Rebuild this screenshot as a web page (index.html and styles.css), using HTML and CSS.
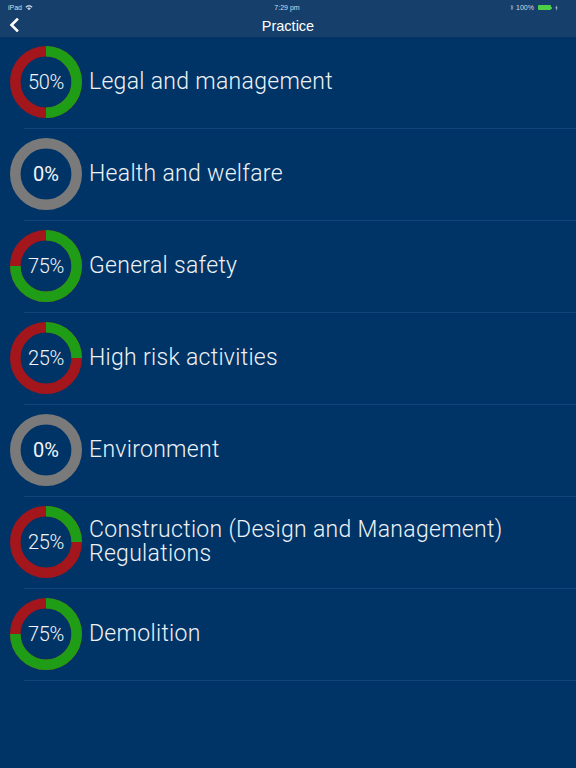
FILE: index.html
```html
<!DOCTYPE html>
<html>
<head>
<meta charset="utf-8">
<link rel="stylesheet" href="styles.css">
</head>
<body>
<header class="top">
  <div class="status">
    <div class="st-left"><span>iPad</span>
      <svg class="wifi" viewBox="0 0 10 8" width="8" height="7"><path d="M0.5 3 Q5 -1 9.5 3 L8.2 4.3 Q5 1.5 1.8 4.3 Z M2.6 5 Q5 3 7.4 5 L5 7.5 Z" fill="#c8d3e0"/></svg>
    </div>
    <div class="st-center">7:29 pm</div>
    <div class="st-right">
      <svg class="bt" viewBox="0 0 6 10" width="4" height="7"><path d="M1 2.8 L4.6 6.4 L2.8 8.4 L2.8 1.6 L4.6 3.6 L1 7.2" fill="none" stroke="#aab6c5" stroke-width="0.9"/></svg>
      <span>100%</span>
      <span class="battery"></span><span class="bat-tip"></span>
      <svg class="bolt" viewBox="0 0 4 8" width="3" height="6"><path d="M2.6 0 L0.4 4.4 L2 4.4 L1.4 8 L3.6 3.4 L2 3.4 Z" fill="#c8d3e0"/></svg>
    </div>
  </div>
  <nav class="navbar">
    <svg class="back" viewBox="0 0 10 14" width="10" height="14"><path d="M8 1.5 L2.5 7 L8 12.5" fill="none" stroke="#ffffff" stroke-width="2.6" stroke-linecap="square"/></svg>
    <h1 class="title">Practice</h1>
  </nav>
</header>
<ul class="list">
  <li class="item"><div class="row">
    <div class="donut"><svg viewBox="0 0 72 72"><circle cx="36" cy="36" r="30.7" class="ring-red"/><circle cx="36" cy="36" r="30.7" class="ring-green" pathLength="100" stroke-dasharray="50 100" transform="rotate(-90 36 36)"/></svg><span class="pct">50%</span></div>
    <div class="label">Legal and management</div></div></li>
  <li class="item"><div class="row">
    <div class="donut"><svg viewBox="0 0 72 72"><circle cx="36" cy="36" r="30.7" class="ring-gray"/></svg><span class="pct zero">0%</span></div>
    <div class="label">Health and welfare</div></div></li>
  <li class="item"><div class="row">
    <div class="donut"><svg viewBox="0 0 72 72"><circle cx="36" cy="36" r="30.7" class="ring-red"/><circle cx="36" cy="36" r="30.7" class="ring-green" pathLength="100" stroke-dasharray="75 100" transform="rotate(-90 36 36)"/></svg><span class="pct">75%</span></div>
    <div class="label">General safety</div></div></li>
  <li class="item"><div class="row">
    <div class="donut"><svg viewBox="0 0 72 72"><circle cx="36" cy="36" r="30.7" class="ring-red"/><circle cx="36" cy="36" r="30.7" class="ring-green" pathLength="100" stroke-dasharray="25 100" transform="rotate(-90 36 36)"/></svg><span class="pct">25%</span></div>
    <div class="label">High risk activities</div></div></li>
  <li class="item"><div class="row">
    <div class="donut"><svg viewBox="0 0 72 72"><circle cx="36" cy="36" r="30.7" class="ring-gray"/></svg><span class="pct zero">0%</span></div>
    <div class="label">Environment</div></div></li>
  <li class="item"><div class="row">
    <div class="donut"><svg viewBox="0 0 72 72"><circle cx="36" cy="36" r="30.7" class="ring-red"/><circle cx="36" cy="36" r="30.7" class="ring-green" pathLength="100" stroke-dasharray="25 100" transform="rotate(-90 36 36)"/></svg><span class="pct">25%</span></div>
    <div class="label">Construction (Design and Management)<br>Regulations</div></div></li>
  <li class="item"><div class="row">
    <div class="donut"><svg viewBox="0 0 72 72"><circle cx="36" cy="36" r="30.7" class="ring-red"/><circle cx="36" cy="36" r="30.7" class="ring-green" pathLength="100" stroke-dasharray="75 100" transform="rotate(-90 36 36)"/></svg><span class="pct">75%</span></div>
    <div class="label">Demolition</div></div></li>
</ul>
</body>
</html>
```
FILE: styles.css
```css
html, body {
  margin: 0;
  padding: 0;
  background: #013466;
  height: 100%;
}
body {
  font-family: "Liberation Sans", Arial, sans-serif;
  color: #ffffff;
}
.top {
  background: #163f6b;
}
.status {
  height: 15px;
  display: flex;
  align-items: center;
  justify-content: space-between;
  padding: 0 18px 0 8px;
  font-size: 7px;
  color: #d5dde8;
}
.st-left, .st-right {
  display: flex;
  align-items: center;
  gap: 3px;
  width: 80px;
}
.st-right {
  justify-content: flex-end;
  gap: 2px;
}
.st-center {
  font-size: 7px;
  margin-left: 8px;
}
.battery {
  display: inline-block;
  width: 13px;
  height: 5px;
  border-radius: 1px;
  margin-left: 2px;
  background: #4cd146;
}
.bat-tip {
  display: inline-block;
  width: 1px;
  height: 2px;
  background: #7a9a80;
  margin-left: -2px;
}
.bolt { margin-left: 1px; }
.navbar {
  height: 22px;
  display: flex;
  align-items: center;
  justify-content: center;
  position: relative;
}
.back {
  position: absolute;
  left: 9px;
  top: 3px;
}
.title {
  margin: 0;
  font-size: 14.5px;
  font-weight: normal;
  font-family: "Liberation Sans", Arial, sans-serif;
}
.list {
  list-style: none;
  margin: 0;
  padding: 0;
}
.item {
  margin-left: 24px;
  border-bottom: 1px solid #14457a;
}
.row {
  margin-left: -14px;
  padding: 9px 0 10px 0;
  display: flex;
  align-items: center;
  gap: 7px;
}
.donut {
  width: 72px;
  height: 72px;
  position: relative;
  flex: none;
  display: flex;
  align-items: center;
  justify-content: center;
}
.donut svg {
  position: absolute;
  inset: 0;
  width: 72px;
  height: 72px;
}
.ring-red, .ring-green, .ring-gray {
  fill: none;
  stroke-width: 10.6;
}
.ring-red { stroke: #a3161c; }
.ring-green { stroke: #1f9d16; }
.ring-gray { stroke: #7a7a7a; }
.pct {
  position: relative;
  font-family: Roboto, "Liberation Sans", sans-serif;
  font-weight: 300;
  font-size: 20px;
  color: #f2f5f9;
  letter-spacing: -0.3px;
}
.pct.zero {
  font-weight: 400;
  font-size: 20px;
  letter-spacing: 0;
}
.label {
  font-family: Roboto, "Liberation Sans", sans-serif;
  font-weight: 300;
  font-size: 23px;
  line-height: 24px;
  color: #eef2f7;
  letter-spacing: 0.3px;
}
```
